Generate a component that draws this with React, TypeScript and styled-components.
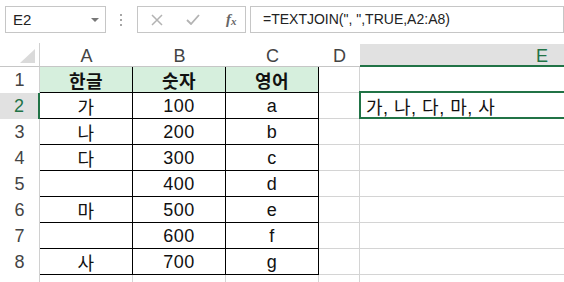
import React from 'react';
import styled, { createGlobalStyle, css } from 'styled-components';

const GlobalStyle = createGlobalStyle`
  html, body {
    margin: 0;
    padding: 0;
    background: #fff;
    overflow: hidden;
  }
`;

const GREEN = '#217346';
const GRID = '#d4d4d4';
const FONT = `"Liberation Sans", "Noto Sans CJK KR", sans-serif`;

const rows: { a: string; b: string; c: string }[] = [
  { a: '가', b: '100', c: 'a' },
  { a: '나', b: '200', c: 'b' },
  { a: '다', b: '300', c: 'c' },
  { a: '', b: '400', c: 'd' },
  { a: '마', b: '500', c: 'e' },
  { a: '', b: '600', c: 'f' },
  { a: '사', b: '700', c: 'g' },
];

function App() {
  return (
    <Sheet>
      <GlobalStyle />
      <FormulaBar>
        <NameBox>
          E2
          <Caret />
        </NameBox>
        <Dots>
          <i />
          <i />
          <i />
        </Dots>
        <FuncBox>
          <svg width="12" height="12" viewBox="0 0 12 12">
            <path d="M1 1 L11 11 M11 1 L1 11" stroke="#b3b3b3" strokeWidth="1.5" fill="none" />
          </svg>
          <svg width="14" height="11" viewBox="0 0 14 11">
            <path d="M1 6 L5 10 L13 1" stroke="#b3b3b3" strokeWidth="1.8" fill="none" />
          </svg>
          <Fx>
            f<sub>x</sub>
          </Fx>
        </FuncBox>
        <FormulaBox>=TEXTJOIN(", ",TRUE,A2:A8)</FormulaBox>
      </FormulaBar>

      <Grid>
        <Corner>
          <Triangle />
        </Corner>
        <ColHead>A</ColHead>
        <ColHead>B</ColHead>
        <ColHead>C</ColHead>
        <ColHead>D</ColHead>
        <ColHead $selected>E</ColHead>

        <RowHead>1</RowHead>
        <Cell $table $head>한글</Cell>
        <Cell $table $head>숫자</Cell>
        <Cell $table $head>영어</Cell>
        <Cell />
        <Cell />

        {rows.map((r, i) => (
          <React.Fragment key={i}>
            <RowHead $selected={i === 0}>{i + 2}</RowHead>
            <Cell $table>{r.a}</Cell>
            <Cell $table>{r.b}</Cell>
            <Cell $table>{r.c}</Cell>
            <Cell />
            {i === 0 ? <Cell $left $active>가, 나, 다, 마, 사</Cell> : <Cell />}
          </React.Fragment>
        ))}

        <RowHead />
        <Cell />
        <Cell />
        <Cell />
        <Cell />
        <Cell />
      </Grid>
    </Sheet>
  );
}

export default App;

const Sheet = styled.div`
  width: 564px;
  height: 282px;
  overflow: hidden;
  font-family: ${FONT};
  color: #222;
`;

const FormulaBar = styled.div`
  display: flex;
  align-items: flex-start;
  box-sizing: border-box;
  height: 43px;
  padding: 6px 0 0 5px;
`;

const boxBase = css`
  box-sizing: border-box;
  height: 27px;
  border: 1px solid #c6c6c6;
  background: #fff;
`;

const NameBox = styled.div`
  ${boxBase};
  position: relative;
  width: 101px;
  padding-left: 7px;
  font-size: 15px;
  line-height: 25px;
  color: #222;
`;

const Caret = styled.span`
  position: absolute;
  right: 6px;
  top: 11px;
  width: 0;
  height: 0;
  border-left: 4px solid transparent;
  border-right: 4px solid transparent;
  border-top: 4px solid #777;
`;

const Dots = styled.div`
  display: flex;
  flex-direction: column;
  gap: 3px;
  margin: 8px 14px 0;
  width: 3px;

  i {
    display: block;
    width: 2px;
    height: 2px;
    background: #a6a6a6;
  }
`;

const FuncBox = styled.div`
  ${boxBase};
  width: 109px;
  display: flex;
  align-items: center;
  padding-left: 13px;
  gap: 22px;

  svg:nth-child(2) {
    margin-left: 1px;
  }
`;

const Fx = styled.span`
  font-family: "Liberation Serif", serif;
  font-style: italic;
  font-weight: bold;
  font-size: 15px;
  color: #666;
  margin-left: 4px;

  sub {
    font-size: 11px;
    vertical-align: baseline;
    position: relative;
    top: 1px;
  }
`;

const FormulaBox = styled.div`
  ${boxBase};
  flex: 1;
  margin-left: 4px;
  padding-left: 12px;
  font-size: 14px;
  line-height: 25px;
  color: #222;
  white-space: nowrap;
`;

const Grid = styled.div`
  display: grid;
  grid-template-columns: 40px 93px 93px 93px 41px 364px;
  grid-template-rows: 24px repeat(9, 26px);
  font-size: 18px;
`;

const Corner = styled.div`
  position: relative;
  box-sizing: border-box;
  border-right: 1px solid #d0d0d0;
  border-bottom: 1px solid #c6c6c6;
`;

const Triangle = styled.div`
  position: absolute;
  right: 4px;
  bottom: 3px;
  width: 0;
  height: 0;
  border-left: 15px solid transparent;
  border-bottom: 14px solid #dadada;
`;

const ColHead = styled.div<{ $selected?: boolean }>`
  box-sizing: border-box;
  display: flex;
  align-items: center;
  justify-content: center;
  padding-top: 3px;
  color: #444;
  border-bottom: 1px solid #c6c6c6;
  ${(p) =>
    p.$selected &&
    css`
      background: #e1e1e1;
      color: ${GREEN};
      border-bottom: 2px solid ${GREEN};
      margin-top: 1px;
    `}
`;

const RowHead = styled.div<{ $selected?: boolean }>`
  box-sizing: border-box;
  display: flex;
  align-items: center;
  justify-content: center;
  color: #444;
  border-right: 1px solid #d0d0d0;
  ${(p) =>
    p.$selected &&
    css`
      background: #e1e1e1;
      color: ${GREEN};
      border-right: 2px solid ${GREEN};
    `}
`;

const Cell = styled.div<{ $table?: boolean; $head?: boolean; $left?: boolean; $active?: boolean }>`
  position: relative;
  box-sizing: border-box;
  display: flex;
  align-items: center;
  justify-content: ${(p) => (p.$left ? 'flex-start' : 'center')};
  padding: 1px 0 0 ${(p) => (p.$left ? '6px' : '0')};
  white-space: nowrap;
  letter-spacing: 0.5px;
  color: #111;
  border-right: 1px solid ${(p) => (p.$table ? '#000' : GRID)};
  border-bottom: 1px solid ${(p) => (p.$table ? '#000' : GRID)};
  ${(p) =>
    p.$head &&
    css`
      background: #d6efdd;
      font-weight: bold;
    `}
  ${(p) =>
    p.$active &&
    css`
      &::after {
        content: '';
        position: absolute;
        top: -2px;
        left: -1px;
        right: -1px;
        bottom: -1px;
        border: 2px solid ${GREEN};
      }
    `}
`;
